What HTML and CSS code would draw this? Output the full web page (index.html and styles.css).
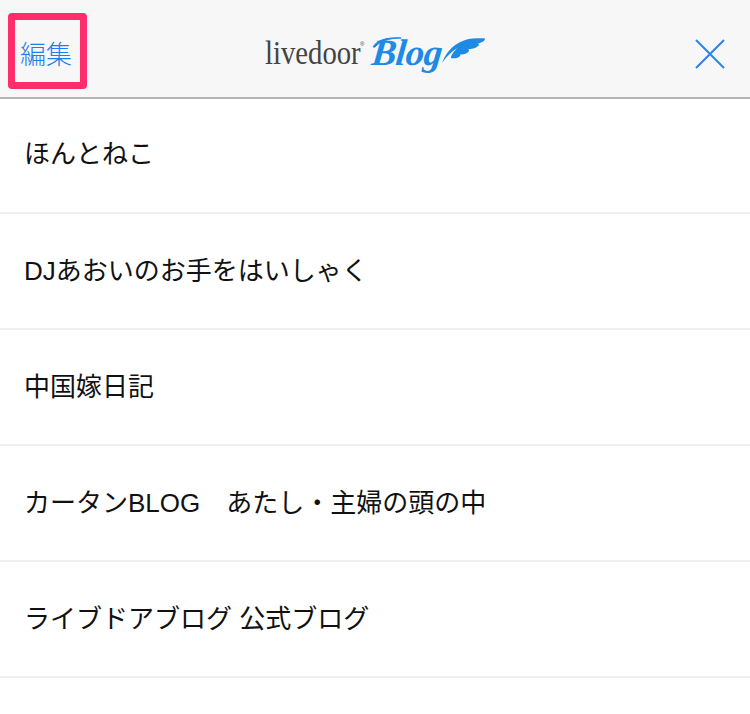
FILE: index.html
```html
<!DOCTYPE html>
<html lang="ja">
<head>
<meta charset="utf-8">
<title>livedoor Blog</title>
<link rel="stylesheet" href="styles.css">
</head>
<body>
<header class="navbar">
  <a class="edit">編集</a>
  <div class="logo">
    <span class="logo-word">livedoor</span><span class="logo-reg">®</span>
    <svg class="logo-swash" viewBox="0 0 30 12" width="30" height="12" aria-hidden="true">
      <path d="M1 11 C5 4 15 1 29 2 C18 2 8 5 3 11 Z" fill="#1d8be6" stroke="#1d8be6"/>
    </svg>
    <span class="logo-blog">Blog</span>
    <svg class="logo-wing" viewBox="0 0 46 27" width="46" height="27" aria-hidden="true">
      <path d="M2 26 C5 18 9 13 14 9 C19 5 26 2 33 1.500 C38 1 42 1 45 1.500 C45 4 42 5.500 37 7 C39.500 7 39.500 8 38 9 C36 11.500 31 12 28 12 C30 13 29 14.500 27 16 C25 17.500 22 17.500 20 17.500 C21 18.500 20 19.500 18 20.500 C16 21.500 13 21.500 11 21 C11 18 14 14 18 10.500 C12 14 7 19 2 26 Z" fill="#1d8be6"/>
    </svg>
  </div>
  <svg class="close" viewBox="0 0 30 30" width="30" height="30" aria-hidden="true">
    <path d="M1 1 L29 29 M29 1 L1 29" stroke="#2a84ee" stroke-width="2" fill="none"/>
  </svg>
</header>
<ul class="list">
  <li class="row">ほんとねこ</li>
  <li class="row">DJあおいのお手をはいしゃく</li>
  <li class="row">中国嫁日記</li>
  <li class="row">カータンBLOG　あたし・主婦の頭の中</li>
  <li class="row">ライブドアブログ 公式ブログ</li>
</ul>
</body>
</html>
```
FILE: styles.css
```css
* { box-sizing: border-box; }
html, body { margin: 0; padding: 0; }
body { background: #fff; width: 750px; height: 714px; overflow: hidden; font-family: "Liberation Sans", "Noto Sans CJK JP", sans-serif; }
.navbar { height: 99px; background: #f7f7f7; border-bottom: 2px solid #b5b5b5; display: flex; align-items: center; justify-content: space-between; padding: 4px 25px 0 8px; position: relative; }
.edit { width: 79px; height: 76px; border: 7px solid #ff2d6b; border-radius: 4px; color: #1f7fee; font-size: 26px; font-weight: 300; display: flex; align-items: center; justify-content: center; padding-top: 4px; padding-right: 3px; }
.close { margin-top: 6px; }
.logo { display: flex; align-items: center; color: #444; height: 50px; position: absolute; left: 265px; top: 28px; }
.logo-word { display: inline-block; width: 95px; font-family: "Liberation Serif", serif; font-size: 33px; transform: scaleX(0.87); transform-origin: left center; white-space: nowrap; }
.logo-reg { font-size: 6px; margin-bottom: 18px; width: 12px; }
.logo-blog { font-family: "Liberation Serif", serif; font-style: italic; font-weight: 700; font-size: 37px; color: #1d8be6; letter-spacing: -0.5px; transform: skewX(-6deg); margin-top: -2px; }
.logo-swash { position: absolute; left: 107px; top: 8px; }
.logo-wing { margin-left: -2px; margin-top: -5px; }
.list { list-style: none; margin: 0; padding: 0; }
.row { height: 116px; border-bottom: 2px solid #efefef; display: flex; align-items: center; padding: 0 0 6px 24px; font-size: 26px; color: #111; }
.row:first-child { height: 115px; padding-bottom: 9px; }
```
